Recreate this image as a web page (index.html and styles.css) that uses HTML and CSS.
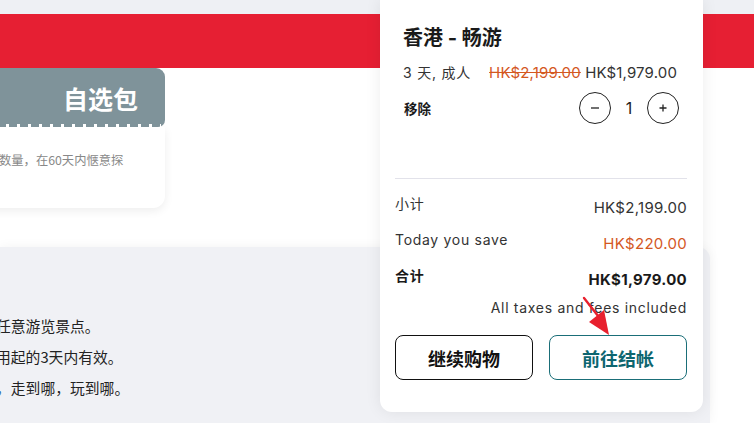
FILE: index.html
```html
<!DOCTYPE html>
<html lang="zh">
<head>
<meta charset="utf-8">
<link rel="stylesheet" href="styles.css">
</head>
<body>
<div class="page">
  <div class="topstrip"></div>
  <div class="banner"></div>
  <div class="upper">
    <div class="ticket">
      <div class="ticket-tab"><span class="ticket-title">自选包</span></div>
      <div class="ticket-body">数量，在60天内惬意探</div>
    </div>
  </div>
  <div class="lower">
    <p class="line">任意游览景点。</p>
    <p class="line">用起的3天内有效。</p>
    <p class="line"><span class="comma">，</span>走到哪，玩到哪。</p>
  </div>

  <div class="cart">
    <div class="item">
      <h2 class="item-title">香港 - 畅游</h2>
      <div class="price-row">
        <span class="meta">3 天, 成人</span>
        <span class="prices"><s class="old">HK$2,199.00</s> <span class="new">HK$1,979.00</span></span>
      </div>
      <div class="qty-row">
        <span class="remove">移除</span>
        <div class="stepper">
          <span class="circle"><svg width="10" height="10" viewBox="0 0 10 10"><path d="M1 5h8" stroke="#222" stroke-width="1.3"/></svg></span>
          <span class="count">1</span>
          <span class="circle"><svg width="10" height="10" viewBox="0 0 10 10"><path d="M1.5 5h7M5 1.5v7" stroke="#222" stroke-width="1.3"/></svg></span>
        </div>
      </div>
    </div>
    <div class="divider"></div>
    <div class="summary">
      <div class="sum-row"><span class="label">小计</span><span class="value">HK$2,199.00</span></div>
      <div class="sum-row"><span class="label">Today you save</span><span class="value save">HK$220.00</span></div>
      <div class="sum-row total"><span class="label">合计</span><span class="value">HK$1,979.00</span></div>
      <div class="taxes">All taxes and fees included</div>
      <div class="buttons">
        <button class="btn btn-continue">继续购物</button>
        <button class="btn btn-checkout">前往结帐</button>
      </div>
    </div>
  </div>

  <svg class="arrow" width="50" height="50" viewBox="0 0 50 50">
    <path d="M9 2 L27 25" stroke="#e8202e" stroke-width="2.4" stroke-linecap="round"/>
    <polygon points="34,39 14,26 29,14" fill="#e8202e"/>
  </svg>
</div>
</body>
</html>
```

FILE: styles.css
```css
* { box-sizing: border-box; }
html, body { margin: 0; padding: 0; }
body {
  width: 754px;
  height: 423px;
  overflow: hidden;
  background: #fff;
  font-family: Inter, "Noto Sans CJK SC", sans-serif;
  color: #333;
}
.page { position: relative; width: 754px; height: 423px; overflow: hidden; }
.topstrip { height: 14px; background: #eef0f4; }
.banner { height: 54px; background: #e61f33; }
.upper { height: 179px; }
.ticket { width: 200px; margin-left: -35px; }
.ticket-tab {
  position: relative;
  height: 59px;
  background: #7f939a;
  border-radius: 0 9px 7px 0;
  display: flex;
  align-items: center;
  justify-content: flex-end;
  padding-right: 27px;
}
.ticket-tab::after {
  content: "";
  position: absolute;
  left: 0; right: 4px; bottom: 0;
  height: 3px;
  background: repeating-linear-gradient(90deg, transparent 0 8px, #fff 8px 11px);
}
.ticket-title {
  color: #fff;
  font-size: 25px;
  font-weight: 700;
  font-family: "Noto Sans CJK SC", sans-serif;
  line-height: 30px;
}
.ticket-body {
  height: 81px;
  background: #fff;
  border-radius: 0 0 12px 0;
  box-shadow: 0 3px 10px rgba(0,0,0,0.07);
  padding: 24px 0 0 34px;
  font-size: 12.3px;
  line-height: 18px;
  color: #888;
  font-family: "Noto Sans CJK SC", sans-serif;
  white-space: nowrap;
}
.lower {
  width: 710px;
  height: 176px;
  background: #f0f1f5;
  border-top-right-radius: 12px;
  box-shadow: 0 0 12px rgba(0,0,0,0.05);
  padding-top: 63px;
}
.line {
  margin: 0 0 0 -4px;
  font-size: 14.8px;
  line-height: 31px;
  color: #222;
  font-family: "Noto Sans CJK SC", sans-serif;
  white-space: nowrap;
}
.comma { color: #3a6fb0; }

.cart {
  position: absolute;
  left: 380px;
  top: 0;
  width: 323px;
  height: 412px;
  background: #fff;
  border-radius: 0 0 12px 12px;
  box-shadow: 0 0 16px rgba(0,0,0,0.08);
}
.item { padding: 24px 24px 0 23px; }
.item-title {
  margin: 0;
  font-size: 20px;
  line-height: 28px;
  font-weight: 700;
  color: #1a1a1a;
}
.price-row {
  margin-top: 10px;
  display: flex;
  justify-content: space-between;
  line-height: 22px;
  font-size: 15px;
  letter-spacing: 0.15px;
}
.meta { font-size: 14px; color: #333; letter-spacing: 0.8px; }
.prices { margin-right: 2px; color: #333; }
.old { color: #d4581f; text-decoration-color: #d4581f; }
.qty-row {
  margin-top: 8px;
  display: flex;
  justify-content: space-between;
  align-items: center;
  height: 32px;
}
.remove { font-size: 13.5px; font-weight: 700; color: #1a1a1a; padding-left: 1px; }
.stepper { display: flex; align-items: center; }
.circle {
  width: 32px; height: 32px;
  border: 1px solid #222;
  border-radius: 50%;
  display: flex; align-items: center; justify-content: center;
}
.count { width: 36px; text-align: center; font-size: 16px; color: #222; }
.divider { margin: 54px 16px 0 15px; height: 1px; background: #e2e2ea; }
.summary { padding: 19px 16px 0 15px; }
.sum-row {
  display: flex;
  justify-content: space-between;
  align-items: flex-start;
  margin-bottom: 16px;
}
.sum-row .label { font-size: 14px; line-height: 12px; color: #333; letter-spacing: 0.7px; }
.sum-row .value { font-size: 15px; line-height: 20px; color: #333; letter-spacing: 0.3px; }
.sum-row .save { color: #d4581f; }
.sum-row.total { margin-bottom: 8px; }
.sum-row.total .label, .sum-row.total .value { font-weight: 700; color: #1a1a1a; }
.taxes { text-align: right; font-size: 14px; line-height: 20px; color: #333; letter-spacing: 0.7px; }
.buttons { margin-top: 17px; display: flex; gap: 16px; }
.btn {
  flex: 1;
  height: 45px;
  background: #fff;
  border-radius: 8px;
  font-family: "Noto Sans CJK SC", sans-serif;
  font-size: 18px;
  font-weight: 700;
  cursor: pointer;
}
.btn-continue { border: 1px solid #111; color: #111; }
.btn-checkout { border: 1px solid #1a6e78; color: #0d6670; }
.arrow { position: absolute; left: 575px; top: 296px; }
```
